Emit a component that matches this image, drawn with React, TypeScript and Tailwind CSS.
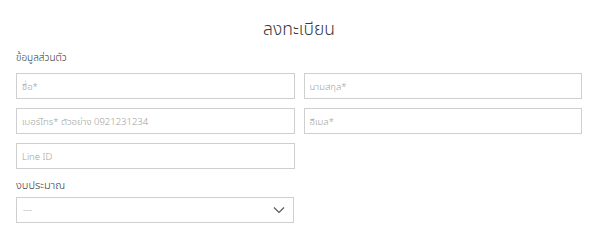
import React from "react";

const Field: React.FC<{ placeholder: string }> = ({ placeholder }) => {
  return (
    <input
      type="text"
      placeholder={placeholder}
      className="w-full h-[26px] border border-[#cfcfcf] bg-white px-[5px] text-[9.5px] font-light text-[#555] placeholder:text-[#a0a0a0] outline-none"
    />
  );
};

const App: React.FC = () => {
  return (
    <div className="w-[600px] h-[240px] bg-white font-['Noto_Sans','Noto_Sans_Thai','Noto_Sans_Thai_UI','Kanit','Prompt',sans-serif] overflow-hidden">
      <div className="pl-4 pr-[18px] pt-[16px]">
        <h1 className="text-center text-[17.5px] leading-[24px] text-[#3a3a3a] font-light">ลงทะเบียน</h1>

        <p className="mt-[9px] text-[10px] leading-[16px] font-light text-[#333]">ข้อมูลส่วนตัว</p>

        <div className="mt-[8px] grid grid-cols-2 gap-x-[9px] gap-y-[9px]">
          <Field placeholder="ชื่อ*" />
          <Field placeholder="นามสกุล*" />
          <Field placeholder="เบอร์โทร* ตัวอย่าง 0921231234" />
          <Field placeholder="อีเมล*" />
          <Field placeholder="Line ID" />
        </div>

        <p className="mt-[8px] text-[11px] leading-[16px] font-light text-[#333]">งบประมาณ</p>

        <div className="mt-[4px] w-[278px] h-[26px] border border-[#cfcfcf] flex items-center justify-between px-[6px]">
          <span className="text-[9.5px] font-light text-[#a0a0a0]">---</span>
          <svg width="12" height="8" viewBox="0 0 12 8" fill="none" className="mr-[2px]">
            <path d="M1 1.5 L6 6.5 L11 1.5" stroke="#555" strokeWidth="1.1" />
          </svg>
        </div>
      </div>
    </div>
  );
};

export default App;
